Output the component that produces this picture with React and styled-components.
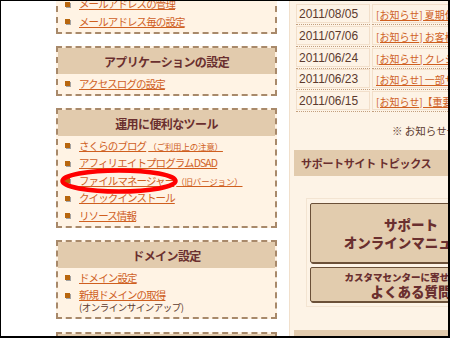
import React from 'react'
import styled, { createGlobalStyle, css } from 'styled-components'

const GlobalStyle = createGlobalStyle`
  body {
    margin: 0;
    font-family: "Noto Sans CJK JP", "Noto Sans", sans-serif;
  }
`

const Frame = styled.div`
  align-items: stretch;
  background: #ffffff;
  border: solid #000000;
  border-width: 1px 2px 2px 1px;
  box-sizing: border-box;
  display: flex;
  height: 338px;
  overflow: hidden;
  width: 450px;
`

const LeftColumn = styled.div`
  display: flex;
  flex-direction: column;
  flex-shrink: 0;
  gap: 12.5px;
  margin-left: 55px;
  margin-top: -6.5px;
  width: 221px;
`

const Box = styled.section`
  background: #fff3e4;
  border: 2px dashed #a8896a;
  flex-shrink: 0;

  ${({ $cut }) =>
    $cut &&
    css`
      border-top: none;
    `}
`

const BoxHeader = styled.h3`
  align-items: center;
  background: #e2cbad;
  color: #6a2f2f;
  display: flex;
  font-size: 12px;
  font-weight: 700;
  height: 26px;
  justify-content: center;
  letter-spacing: -0.6px;
  margin: 0;
`

const List = styled.ul`
  list-style: none;
  margin: 0;
  padding: 1px 0;
`

const Item = styled.li`
  align-items: flex-start;
  display: flex;
  font-size: 10.5px;
  letter-spacing: -0.9px;
  line-height: 12px;
  padding: 2.75px 0 2.75px 7px;
  position: relative;
`

const Bullet = styled.span`
  background: #b8660d;
  box-shadow: 1px 1px 0 #a3a3a3;
  flex-shrink: 0;
  height: 5px;
  margin: 3.5px 9px 0 0;
  width: 5px;
`

const Link = styled.a`
  color: #cf5f1f;
  text-decoration: underline;
  white-space: nowrap;
`

const SubLink = styled(Link)`
  font-size: 8.5px;
  letter-spacing: -0.2px;
  margin-left: 2px;
`

const Note = styled.span`
  color: #5c3a2e;
  display: block;
  font-size: 9.5px;
  letter-spacing: -0.5px;
  white-space: nowrap;
`

const Circle = styled.svg`
  left: 2px;
  pointer-events: none;
  position: absolute;
  top: -4px;
`

const RightPanel = styled.div`
  background: #fdf3e6;
  border-left: 1px solid #f1e0cc;
  display: flex;
  flex-direction: column;
  flex-shrink: 0;
  margin-left: 12px;
  padding-top: 2.25px;
  width: 320px;

  & > * {
    flex-shrink: 0;
  }
`

const NewsRow = styled.div`
  display: flex;
  gap: 2px;
  padding: 0.75px 0 0 6px;
`

const CellWrap = styled.div`
  border-bottom: 1px dotted #c39f7e;
  padding-bottom: 1px;
  ${({ $grow }) =>
    $grow
      ? css`
          flex: 1;
          min-width: 0;
        `
      : css`
          flex-shrink: 0;
          width: 74px;
        `}
`

const Cell = styled.div`
  border: 1px solid #f2dfca;
  box-sizing: border-box;
  height: 19px;
  line-height: 17px;
  overflow: hidden;
  padding-top: 1px;
  white-space: nowrap;
`

const DateCell = styled(Cell)`
  color: #5c3a2e;
  font-family: "Liberation Sans", Arial, sans-serif;
  font-size: 12px;
  padding-left: 2px;
`

const TitleCell = styled(Cell)`
  font-size: 10px;
  padding-left: 3px;
`

const MoreNote = styled.div`
  color: #5c3a2e;
  font-size: 10.5px;
  line-height: 14px;
  margin-top: 12px;
  padding-left: 102px;
  white-space: nowrap;
`

const Band = styled.h3`
  align-items: ${({ $low }) => ($low ? 'flex-start' : 'center')};
  background: #e2cbad;
  box-sizing: border-box;
  color: #6a2f2f;
  display: flex;
  font-size: 11px;
  font-weight: 700;
  height: 26px;
  letter-spacing: -0.3px;
  margin: ${({ $top }) => $top}px 0 0 4px;
  padding: ${({ $low }) => ($low ? '4px' : '0')} 0 0 7px;
  white-space: nowrap;
`

const SupportBox = styled.div`
  align-self: flex-start;
  border: 1px solid #f3e4d2;
  display: flex;
  flex-direction: column;
  gap: 4px;
  margin: 22px 0 0 16px;
  padding: 4px 3px;
`

const SupportButton = styled.div`
  align-items: center;
  background: #e2ccae;
  border: 1px solid #6b5038;
  border-radius: 2px;
  box-shadow: 1px 1px 0 #6b5038;
  box-sizing: border-box;
  color: #6a2f2f;
  display: flex;
  flex-direction: column;
  flex-shrink: 0;
  font-weight: 900;
  height: ${({ $h }) => $h}px;
  justify-content: center;
  width: 202px;
`

const BigLine = styled.span`
  font-size: 13.5px;
  line-height: ${({ $lh }) => $lh || 18}px;
  white-space: nowrap;
`

const SmallLine = styled.span`
  font-size: 9.5px;
  line-height: 12px;
  white-space: nowrap;
`

const news = [
  ['2011/08/05', '[お知らせ] 夏期休業期間中のサポート対応について'],
  ['2011/07/06', '[お知らせ] お客様情報の確認方法について'],
  ['2011/06/24', '[お知らせ] クレジットカード決済について'],
  ['2011/06/23', '[お知らせ] 一部サービスのメンテナンスについて'],
  ['2011/06/15', '[お知らせ]【重要】サーバー移転のお願い'],
]

const Entry = ({ children, sub, note, circled }) => (
  <Item>
    <Bullet />
    <div>
      <Link href="#">{children}</Link>
      {sub && <SubLink href="#">{sub}</SubLink>}
      {note && <Note>{note}</Note>}
    </div>
    {circled && (
      <Circle width="120" height="27" viewBox="0 0 120 27">
        <ellipse
          cx="59"
          cy="13"
          rx="56.5"
          ry="10.5"
          fill="none"
          stroke="#ff0000"
          strokeWidth="4.5"
        />
      </Circle>
    )}
  </Item>
)

const App = () => {
  return (
    <>
      <GlobalStyle />
      <Frame>
        <LeftColumn>
          <Box $cut>
            <List>
              <Entry>メールアドレスの管理</Entry>
              <Entry>メールアドレス毎の設定</Entry>
            </List>
          </Box>
          <Box>
            <BoxHeader>アプリケーションの設定</BoxHeader>
            <List>
              <Entry>アクセスログの設定</Entry>
            </List>
          </Box>
          <Box>
            <BoxHeader>運用に便利なツール</BoxHeader>
            <List>
              <Entry sub="（ご利用上の注意）">さくらのブログ</Entry>
              <Entry>アフィリエイトプログラムDSAD</Entry>
              <Entry sub="（旧バージョン）" circled>
                ファイルマネージャー
              </Entry>
              <Entry>クイックインストール</Entry>
              <Entry>リソース情報</Entry>
            </List>
          </Box>
          <Box>
            <BoxHeader>ドメイン設定</BoxHeader>
            <List>
              <Entry>ドメイン設定</Entry>
              <Entry note="(オンラインサインアップ)">新規ドメインの取得</Entry>
            </List>
          </Box>
          <Box>
            <BoxHeader>サーバ情報</BoxHeader>
          </Box>
        </LeftColumn>

        <RightPanel>
          {news.map(([date, title]) => (
            <NewsRow key={date}>
              <CellWrap>
                <DateCell>{date}</DateCell>
              </CellWrap>
              <CellWrap $grow>
                <TitleCell>
                  <Link href="#">{title}</Link>
                </TitleCell>
              </CellWrap>
            </NewsRow>
          ))}
          <MoreNote>※ お知らせ一覧はこちら</MoreNote>
          <Band $top={12}>サポートサイト トピックス</Band>
          <SupportBox>
            <SupportButton $h={60}>
              <BigLine>サポート</BigLine>
              <BigLine>オンラインマニュアル</BigLine>
            </SupportButton>
            <SupportButton $h={35}>
              <SmallLine>カスタマセンターに寄せられた</SmallLine>
              <BigLine $lh={16}>よくある質問</BigLine>
            </SupportButton>
          </SupportBox>
          <Band $top={23} $low>
            さくらインターネット からのお知らせ
          </Band>
        </RightPanel>
      </Frame>
    </>
  )
}

export default App
